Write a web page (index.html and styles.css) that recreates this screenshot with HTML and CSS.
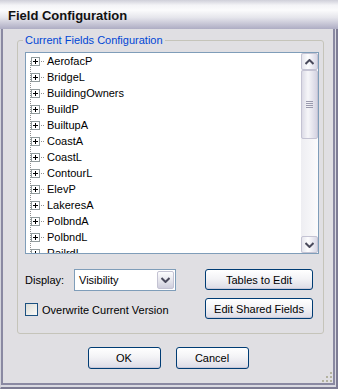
FILE: index.html
```html
<!DOCTYPE html>
<html>
<head>
<link rel="stylesheet" href="styles.css">
</head>
<body>

<div class="window">
  <div class="titlebar">Field Configuration</div>

  <div class="frame">
    <div class="dialog">

      <fieldset class="group">
        <legend>Current Fields Configuration</legend>

        <div class="listbox">
          <div class="items">
            <div class="item"><span class="exp"></span><span class="dash"></span>AerofacP</div>
            <div class="item"><span class="exp"></span><span class="dash"></span>BridgeL</div>
            <div class="item"><span class="exp"></span><span class="dash"></span>BuildingOwners</div>
            <div class="item"><span class="exp"></span><span class="dash"></span>BuildP</div>
            <div class="item"><span class="exp"></span><span class="dash"></span>BuiltupA</div>
            <div class="item"><span class="exp"></span><span class="dash"></span>CoastA</div>
            <div class="item"><span class="exp"></span><span class="dash"></span>CoastL</div>
            <div class="item"><span class="exp"></span><span class="dash"></span>ContourL</div>
            <div class="item"><span class="exp"></span><span class="dash"></span>ElevP</div>
            <div class="item"><span class="exp"></span><span class="dash"></span>LakeresA</div>
            <div class="item"><span class="exp"></span><span class="dash"></span>PolbndA</div>
            <div class="item"><span class="exp"></span><span class="dash"></span>PolbndL</div>
            <div class="item"><span class="exp"></span><span class="dash"></span>RailrdL</div>
          </div>

          <div class="scrollbar">
            <div class="sb-btn">
              <svg width="9" height="6" viewBox="0 0 9 6"><path d="M0.5 5 L4.5 1 L8.5 5" fill="none" stroke="#4a4a5c" stroke-width="2"/></svg>
            </div>
            <div class="track">
              <div class="thumb"><span class="grip"></span></div>
            </div>
            <div class="sb-btn">
              <svg width="9" height="6" viewBox="0 0 9 6"><path d="M0.5 1 L4.5 5 L8.5 1" fill="none" stroke="#4a4a5c" stroke-width="2"/></svg>
            </div>
          </div>
        </div>

        <div class="controls">
          <div class="left">
            <div class="display-row">
              <span class="label">Display:</span>
              <div class="combo">
                <span class="combo-text">Visibility</span>
                <span class="combo-btn">
                  <svg width="9" height="6" viewBox="0 0 9 6"><path d="M0.5 1 L4.5 5 L8.5 1" fill="none" stroke="#4a4a5c" stroke-width="2"/></svg>
                </span>
              </div>
            </div>
            <label class="check-row">
              <span class="checkbox"></span>
              Overwrite Current Version
            </label>
          </div>

          <div class="right">
            <div class="button wide">Tables to Edit</div>
            <div class="button wide">Edit Shared Fields</div>
          </div>
        </div>
      </fieldset>

      <div class="footer">
        <div class="button small">OK</div>
        <div class="button small">Cancel</div>
      </div>

      <svg class="grip-corner" width="11" height="11" viewBox="0 0 11 11">
        <g fill="#b3b29f">
          <rect x="8" y="0" width="2" height="2"/>
          <rect x="4" y="4" width="2" height="2"/>
          <rect x="8" y="4" width="2" height="2"/>
          <rect x="0" y="8" width="2" height="2"/>
          <rect x="4" y="8" width="2" height="2"/>
          <rect x="8" y="8" width="2" height="2"/>
        </g>
      </svg>

    </div>
  </div>
</div>

</body>
</html>
```

FILE: styles.css
```css
body {
  margin: 0;
  background: #e0dfe3;
  font-family: "Liberation Sans", Arial, sans-serif;
  font-size: 11px;
  color: #000;
}

.window {
  width: 338px;
  height: 389px;
  display: flex;
  flex-direction: column;
}

.titlebar {
  height: 29px;
  flex: none;
  box-sizing: border-box;
  padding: 8px 0 0 8px;
  font-size: 13px;
  font-weight: bold;
  color: #111;
  background: linear-gradient(#cfcfd9 0%, #f4f4f7 18%, #fbfbfc 35%, #e6e6ec 60%, #c3c2d3 85%, #aeadc4 100%);
}

.frame {
  flex: 1;
  display: flex;
  border-left: 1px solid #d4d4dc;
  border-right: 2px solid #7d7c94;
  border-bottom: 2px solid #7d7c94;
  padding: 0 1px 2px 0;
  background: #d9d9e1;
}

.dialog {
  flex: 1;
  position: relative;
  border: solid #8a89a2;
  border-width: 0 2px 2px 2px;
  background: #e0dfe3;
}

/* group box */
.group {
  margin: 5px 9px 0 14px;
  padding: 5px 4px 14px 7px;
  border: 1px solid #c5c4ba;
  border-radius: 3px;
}

.group legend {
  margin-left: -2px;
  padding: 0 2px;
  line-height: 13px;
  color: #0046d5;
}

/* tree list */
.listbox {
  height: 202px;
  box-sizing: border-box;
  border: 1px solid #7f9db9;
  background: #fff;
  display: flex;
  overflow: hidden;
}

.items {
  flex: 1;
  padding-left: 5px;
  overflow: hidden;
  background: repeating-linear-gradient(#8f8f8f 0 1px, transparent 1px 2px) 4px 8px / 1px 100% no-repeat;
}

.item {
  height: 16px;
  display: flex;
  align-items: center;
  white-space: nowrap;
}

.exp {
  width: 9px;
  height: 9px;
  box-sizing: border-box;
  border: 1px solid #919b9c;
  background:
    linear-gradient(#000, #000) center / 5px 1px no-repeat,
    linear-gradient(#000, #000) center / 1px 5px no-repeat,
    #fff;
}

.dash {
  width: 3px;
  height: 1px;
  margin: 0 3px 0 1px;
  background: repeating-linear-gradient(to right, #8f8f8f 0 1px, transparent 1px 2px);
}

.scrollbar {
  width: 17px;
  flex: none;
  display: flex;
  flex-direction: column;
  background: linear-gradient(to right, #eeeef2, #fbfbfc);
}

.sb-btn {
  height: 17px;
  flex: none;
  box-sizing: border-box;
  border: 1px solid #c4c3d3;
  border-radius: 2px;
  background: linear-gradient(to right, #e6e6ee, #fdfdfe 40%, #d9d8e6);
  display: flex;
  align-items: center;
  justify-content: center;
}

.track {
  flex: 1;
}

.thumb {
  height: 69px;
  box-sizing: border-box;
  border: 1px solid #c4c3d3;
  border-radius: 2px;
  background: linear-gradient(to right, #dcdbe6, #f6f6f9 40%, #d4d3e2);
  display: flex;
  align-items: center;
  justify-content: center;
}

.grip {
  width: 7px;
  height: 7px;
  background: repeating-linear-gradient(#9a99ad 0 1px, transparent 1px 2px);
}

/* lower controls */
.controls {
  display: flex;
  justify-content: space-between;
  padding: 15px 6px 0 0;
}

.left {
  display: flex;
  flex-direction: column;
  gap: 12px;
}

.display-row {
  display: flex;
  align-items: center;
}

.label {
  width: 49px;
}

.combo {
  width: 102px;
  height: 22px;
  box-sizing: border-box;
  border: 1px solid #7f9db9;
  background: #fff;
  display: flex;
  align-items: center;
  padding: 1px;
}

.combo-text {
  flex: 1;
  padding-left: 3px;
}

.combo-btn {
  width: 17px;
  height: 18px;
  box-sizing: border-box;
  border: 1px solid #c4c3d3;
  border-radius: 2px;
  background: linear-gradient(#fdfdfe, #e2e2ea 60%, #cfcedd);
  display: flex;
  align-items: center;
  justify-content: center;
}

.check-row {
  display: flex;
  align-items: center;
  gap: 4px;
}

.checkbox {
  width: 13px;
  height: 13px;
  box-sizing: border-box;
  border: 1px solid #1c5180;
  background: linear-gradient(135deg, #dcdcd7, #fafaf8);
}

.right {
  display: flex;
  flex-direction: column;
  gap: 8px;
}

.button {
  box-sizing: border-box;
  border: 1px solid #003c74;
  border-radius: 3px;
  background: linear-gradient(#ffffff, #f3f3f6 45%, #dcdbe6);
  box-shadow: inset 0 -1px 0 #c9c8d8;
  display: flex;
  align-items: center;
  justify-content: center;
}

.button.wide {
  width: 108px;
  height: 21px;
}

.button.small {
  width: 73px;
  height: 22px;
}

.footer {
  display: flex;
  justify-content: center;
  gap: 15px;
  margin-top: 13px;
}

.grip-corner {
  position: absolute;
  right: 0;
  bottom: 0;
}
```
